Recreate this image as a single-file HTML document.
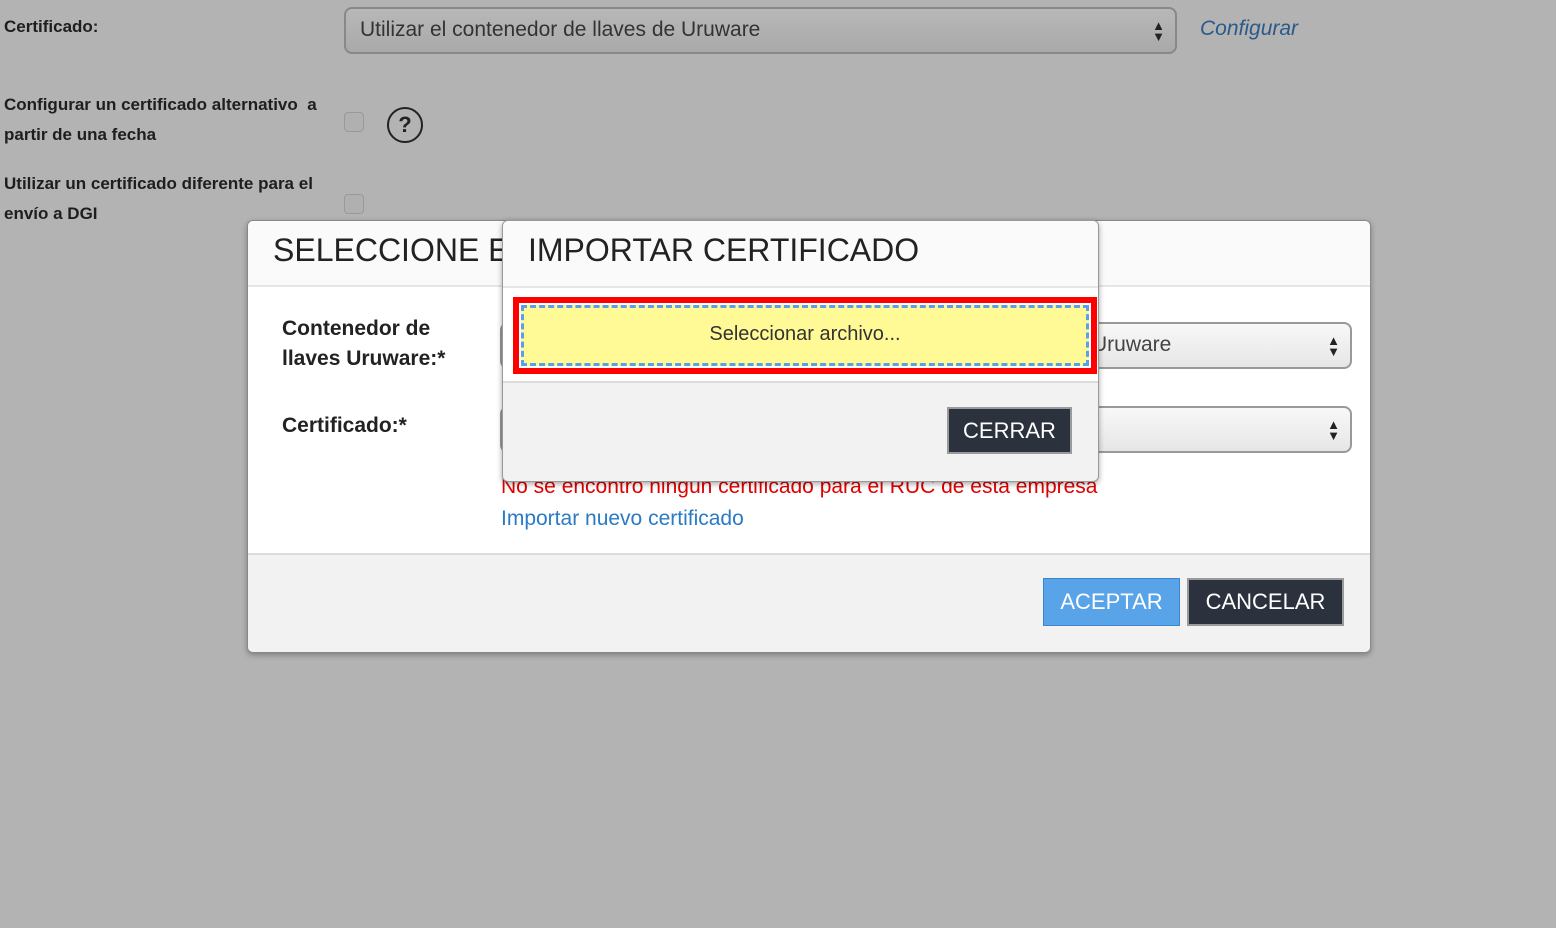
<!DOCTYPE html>
<html><head><meta charset="utf-8"><style>
*{box-sizing:border-box}
body{margin:0;width:1556px;height:928px;background:#b3b3b3;font-family:"Liberation Sans",sans-serif;position:relative;overflow:hidden;color:#222}
.a{position:absolute}
.lbl{font-weight:bold;font-size:17px;color:#1e1e1e;line-height:30px;white-space:nowrap}
.cb{position:absolute;width:20px;height:20px;border:1px solid #999;border-radius:4px;background:#b0b0b0}
.sel{position:absolute;border:2px solid #999;border-radius:8px;background:linear-gradient(#f8f8f8,#e6e6e6);font-size:21px;color:#444;padding-left:14px;line-height:42px}
.arr{position:absolute;right:10px;top:50%;transform:translateY(-50%);font-size:13px;line-height:11px;color:#222}
</style></head><body>
<div class="a lbl" style="left:4px;top:12px">Certificado:</div>
<div class="sel" style="left:344px;top:7px;width:833px;height:47px;background:linear-gradient(#b8b8b8,#a9a9a9);border-color:#888;color:#333">Utilizar el contenedor de llaves de Uruware<div class="arr">▲<br>▼</div></div>
<div class="a" style="left:1200px;top:17px;font-size:21px;font-style:italic;color:#2a5a8a">Configurar</div>
<div class="a lbl" style="left:4px;top:90px">Configurar un certificado alternativo &nbsp;a<br>partir de una fecha</div>
<div class="cb" style="left:344px;top:112px"></div>
<div class="a" style="left:387px;top:107px;width:36px;height:36px;border:2px solid #222;border-radius:50%;text-align:center;font-weight:bold;font-size:22px;line-height:32px">?</div>
<div class="a lbl" style="left:4px;top:169px">Utilizar un certificado diferente para el<br>envío a DGI</div>
<div class="cb" style="left:344px;top:194px"></div>

<div class="a" style="left:247px;top:220px;width:1124px;height:433px;background:#fff;border:1px solid #888;border-radius:6px;overflow:hidden;box-shadow:0 2px 6px rgba(0,0,0,.3)">
 <div class="a" style="left:0;top:0;width:100%;height:66px;background:#fafafa;border-bottom:2px solid #e6e6e6"></div>
 <div class="a" style="left:25px;top:11px;font-size:32px;color:#222">SELECCIONE EL</div>
 <div class="a" style="left:34px;top:93px;font-size:21px;font-weight:bold;line-height:30px;width:200px;color:#222">Contenedor de llaves Uruware:*</div>
 <div class="a" style="left:34px;top:193px;font-size:21px;font-weight:bold;color:#222">Certificado:*</div>
 <div class="sel" style="left:252px;top:101px;width:852px;height:47px"><span style="position:absolute;left:590px;top:0">Uruware</span><div class="arr">▲<br>▼</div></div>
 <div class="sel" style="left:252px;top:185px;width:852px;height:47px"><div class="arr">▲<br>▼</div></div>
 <div class="a" style="left:253px;top:254px;font-size:21px;color:#e00000;white-space:nowrap">No se encontró ningún certificado para el RUC de esta empresa</div>
 <div class="a" style="left:253px;top:286px;font-size:21px;color:#2a7bc4">Importar nuevo certificado</div>
 <div class="a" style="left:0;top:332px;width:100%;height:101px;background:#f2f2f2;border-top:2px solid #dcdcdc"></div>
 <div class="a" style="left:795px;top:357px;width:137px;height:48px;background:#59a3e8;border:1px solid #3b86cc;color:#fff;font-size:22px;text-align:center;line-height:46px">ACEPTAR</div>
 <div class="a" style="left:939px;top:357px;width:157px;height:48px;background:#2b323d;border:2px solid #9a9a9a;color:#fff;font-size:22px;text-align:center;line-height:44px">CANCELAR</div>
</div>

<div class="a" style="left:502px;top:220px;width:597px;height:262px;background:#f2f2f2;border:1px solid #999;border-radius:6px;overflow:hidden;box-shadow:0 2px 6px rgba(0,0,0,.35)">
 <div class="a" style="left:0;top:0;width:100%;height:67px;background:#fafafa;border-bottom:2px solid #e6e6e6"></div>
 <div class="a" style="left:25px;top:11px;font-size:32px;color:#222">IMPORTAR CERTIFICADO</div>
 <div class="a" style="left:0;top:67px;width:100%;height:95px;background:#fff;border-bottom:2px solid #dcdcdc"></div>
 <div class="a" style="left:10px;top:76px;width:584px;height:77px;background:#f00;padding:6px">
  <div style="width:100%;height:100%;background:#fff;padding:2px"><div style="width:100%;height:100%;background:#fffa96;border:3px dashed #5aa0e6;text-align:center;font-size:20px;color:#333;line-height:53px">Seleccionar archivo...</div></div>
 </div>
 <div class="a" style="left:444px;top:186px;width:125px;height:47px;background:#2b323d;border:2px solid #9a9a9a;color:#fff;font-size:22px;text-align:center;line-height:43px">CERRAR</div>
</div>
</body></html>
